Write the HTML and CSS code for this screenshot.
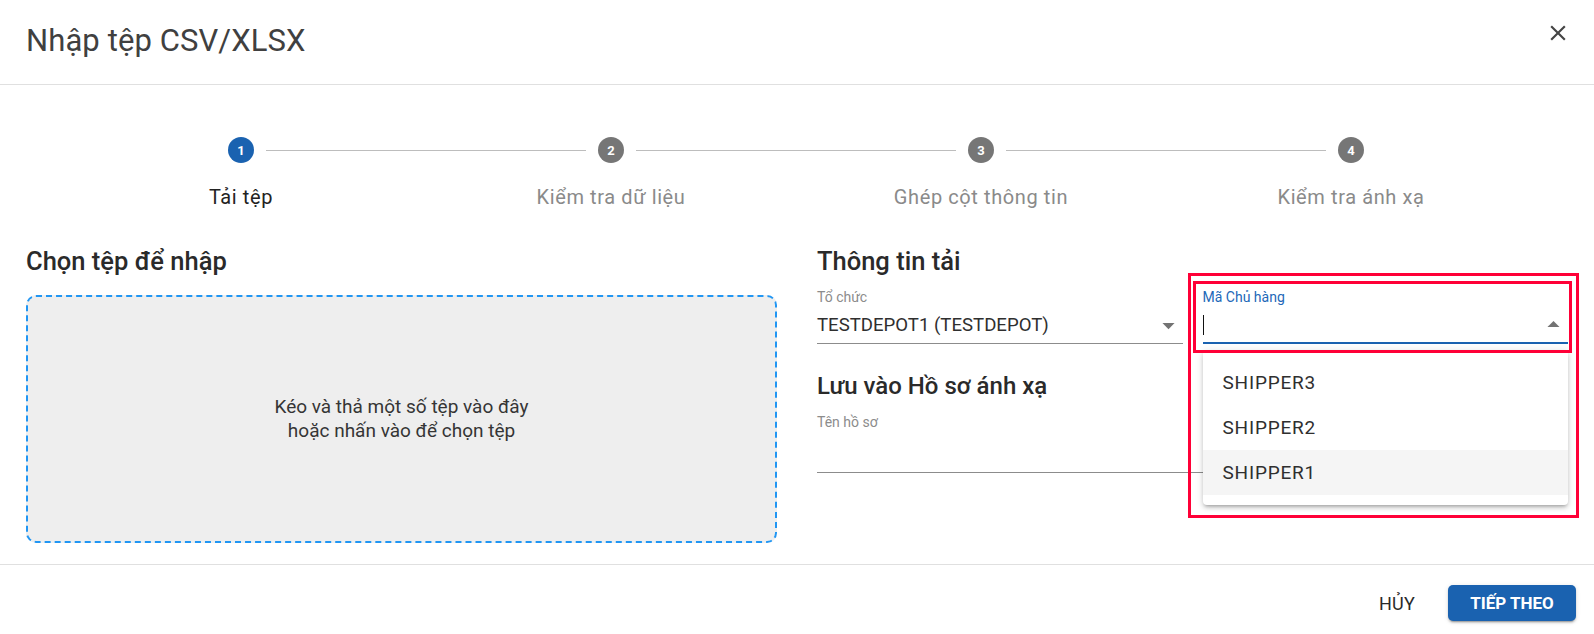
FILE: index.html
```html
<!DOCTYPE html>
<html lang="vi">
<head>
<meta charset="utf-8">
<title>Nhập tệp CSV/XLSX</title>
<link rel="stylesheet" href="styles.css">
</head>
<body>
<div class="dialog">
  <header class="dlg-header">
    <h1 class="dlg-title">Nhập tệp CSV/XLSX</h1>
    <button class="close-btn" aria-label="Đóng">
      <svg viewBox="0 0 24 24" width="26" height="26"><path d="M19 6.41L17.59 5 12 10.59 6.41 5 5 6.41 10.59 12 5 17.59 6.41 19 12 13.41 17.59 19 19 17.59 13.41 12z" fill="currentColor"/></svg>
    </button>
  </header>

  <main class="dlg-content">
    <div class="stepper">
      <div class="step-row">
        <div class="step-cell first"><span class="conn"></span><span class="circle active">1</span><span class="conn"></span></div>
        <div class="step-cell"><span class="conn"></span><span class="circle">2</span><span class="conn"></span></div>
        <div class="step-cell"><span class="conn"></span><span class="circle">3</span><span class="conn"></span></div>
        <div class="step-cell last"><span class="conn"></span><span class="circle">4</span><span class="conn"></span></div>
      </div>
      <div class="step-row labels">
        <div class="step-label active">Tải tệp</div>
        <div class="step-label">Kiểm tra dữ liệu</div>
        <div class="step-label">Ghép cột thông tin</div>
        <div class="step-label">Kiểm tra ánh xạ</div>
      </div>
    </div>

    <div class="columns">
      <section class="col">
        <h2 class="section-title">Chọn tệp để nhập</h2>
        <div class="dropzone">
          <p>Kéo và thả một số tệp vào đây<br>hoặc nhấn vào để chọn tệp</p>
        </div>
      </section>

      <section class="col">
        <h2 class="section-title">Thông tin tải</h2>
        <div class="field-row">
          <div class="field">
            <label class="field-label">Tổ chức</label>
            <div class="input select">
              <span class="value">TESTDEPOT1 (TESTDEPOT)</span>
              <svg class="arrow" viewBox="0 0 24 24" width="29" height="29"><path d="M7 10l5 5 5-5z" fill="currentColor"/></svg>
            </div>
          </div>
          <div class="field focused">
            <label class="field-label">Mã Chủ hàng</label>
            <div class="input select">
              <span class="cursor"></span>
              <svg class="arrow" viewBox="0 0 24 24" width="29" height="29"><path d="M7 14l5-5 5 5z" fill="currentColor"/></svg>
            </div>
            <ul class="menu">
              <li class="menu-item">SHIPPER3</li>
              <li class="menu-item">SHIPPER2</li>
              <li class="menu-item hover">SHIPPER1</li>
            </ul>
            <div class="mark mark-outer"></div>
            <div class="mark mark-inner"></div>
          </div>
        </div>

        <h2 class="section-title second">Lưu vào Hồ sơ ánh xạ</h2>
        <div class="field">
          <label class="field-label">Tên hồ sơ</label>
          <div class="input text"></div>
        </div>
      </section>
    </div>
  </main>

  <footer class="dlg-actions">
    <button class="btn btn-text">HỦY</button>
    <button class="btn btn-primary">TIẾP THEO</button>
  </footer>
</div>
</body>
</html>
```

FILE: styles.css
```css
* { box-sizing: border-box; }

html, body {
  margin: 0;
  padding: 0;
  width: 1594px;
  height: 634px;
  overflow: hidden;
  background: #fff;
  font-family: Roboto, "Noto Sans", "Liberation Sans", sans-serif;
}

.dialog {
  display: flex;
  flex-direction: column;
  width: 1594px;
  height: 634px;
}

/* Header */
.dlg-header {
  display: flex;
  justify-content: space-between;
  align-items: flex-start;
  height: 85px;
  border-bottom: 1px solid #e0e0e0;
  padding: 0 23px 0 26px;
}

.dlg-title {
  margin: 0;
  font-size: 31px;
  font-weight: 400;
  line-height: 82px;
  color: #404040;
  letter-spacing: 0.1px;
}

.close-btn {
  margin-top: 20px;
  padding: 0;
  border: 0;
  background: none;
  color: #454545;
  width: 26px;
  height: 26px;
  display: flex;
}

/* Content */
.dlg-content {
  padding: 0 26px 21px 26px;
}

.stepper {
  padding: 52px 32px 0 30px;
}

.step-row {
  display: grid;
  grid-template-columns: repeat(4, 1fr);
}

.step-cell {
  display: flex;
  align-items: center;
  height: 26px;
}

.conn {
  flex: 1;
  height: 1px;
  background: #bdbdbd;
}

.step-cell .conn:first-child { margin-right: 12px; }
.step-cell .conn:last-child { margin-left: 12px; }
.step-cell.first .conn:first-child,
.step-cell.last .conn:last-child { visibility: hidden; }

.circle {
  width: 26px;
  height: 26px;
  border-radius: 50%;
  background: #767676;
  color: #fff;
  font-size: 13px;
  font-weight: 700;
  display: flex;
  align-items: center;
  justify-content: center;
}

.circle.active { background: #1a62b0; }

.labels { margin-top: 22px; }

.step-label {
  text-align: center;
  font-size: 20px;
  line-height: 24px;
  letter-spacing: 0.6px;
  color: #8a8a8a;
}

.step-label.active { color: #222; }

.columns {
  display: grid;
  grid-template-columns: 1fr 1fr;
  column-gap: 40px;
  margin-top: 36px;
}

.section-title {
  margin: 0;
  font-size: 25.5px;
  font-weight: 500;
  line-height: 32px;
  color: #2a2a2a;
}

.section-title.second {
  margin-top: 26px;
  font-size: 24px;
}

.dropzone {
  margin-top: 18px;
  height: 248px;
  border: 2px dashed #2196f3;
  border-radius: 10px;
  background: #eeeeee;
  display: flex;
  align-items: center;
  justify-content: center;
}

.dropzone p {
  margin: 0;
  text-align: center;
  font-size: 19px;
  line-height: 24px;
  color: #353535;
}

.field-row {
  display: grid;
  grid-template-columns: 1fr 1fr;
  column-gap: 20px;
  margin-top: 12px;
}

.field {
  position: relative;
}

.section-title.second + .field { margin-top: 12px; }

.field-label {
  display: block;
  font-size: 14px;
  line-height: 17px;
  color: #8c8c8c;
}

.input {
  display: flex;
  align-items: center;
  border-bottom: 1px solid #8c8c8c;
}

.input.select {
  height: 38px;
  padding-top: 1px;
}

.input.text {
  height: 42px;
}

.value {
  flex: 1;
  font-size: 18.6px;
  color: #2f2f2f;
}

.arrow {
  color: #737373;
  margin-left: auto;
}

.field.focused .field-label { color: #2268b8; }
.field.focused .input { border-bottom: 2px solid #1a62b0; }

.cursor {
  display: block;
  width: 1px;
  height: 20px;
  background: #111;
}

.menu {
  position: absolute;
  top: calc(100% + 6px);
  left: 0;
  right: 0;
  margin: 0;
  padding: 10px 0;
  list-style: none;
  background: #fff;
  border-radius: 4px;
  box-shadow: 0 3px 3px -2px rgba(0,0,0,0.2), 0 3px 4px 0 rgba(0,0,0,0.14), 0 1px 8px 0 rgba(0,0,0,0.12);
  z-index: 5;
}

.menu-item {
  height: 45px;
  display: flex;
  align-items: center;
  padding-left: 20px;
  font-size: 19px;
  letter-spacing: 0.8px;
  color: #2f2f2f;
}

.menu-item.hover { background: #f5f5f5; }

.mark {
  position: absolute;
  border: 3px solid #ff0037;
  pointer-events: none;
  z-index: 6;
}

.mark-outer {
  left: -15px;
  top: -16px;
  width: 391px;
  height: 245px;
}

.mark-inner {
  left: -10px;
  top: -8px;
  width: 379px;
  height: 72px;
}

/* Footer */
.dlg-actions {
  border-top: 1px solid #e0e0e0;
  display: flex;
  justify-content: flex-end;
  align-items: flex-start;
  gap: 16px;
  padding: 20px 18px 0 0;
  flex: 1;
}

.btn {
  height: 36px;
  border: 0;
  border-radius: 5px;
  font-family: Roboto, "Noto Sans", "Liberation Sans", sans-serif;
  font-size: 17px;
  padding: 0 20px;
  cursor: pointer;
}

.btn-text {
  background: none;
  color: #2a2a2a;
  font-weight: 400;
  font-size: 18px;
  letter-spacing: 0.3px;
  min-width: 70px;
  padding: 0 16px;
}

.btn-primary {
  width: 128px;
  background: #1a62b0;
  color: #fff;
  font-weight: 700;
  box-shadow: 0 3px 1px -2px rgba(0,0,0,0.2), 0 2px 2px 0 rgba(0,0,0,0.14), 0 1px 5px 0 rgba(0,0,0,0.12);
}
```
